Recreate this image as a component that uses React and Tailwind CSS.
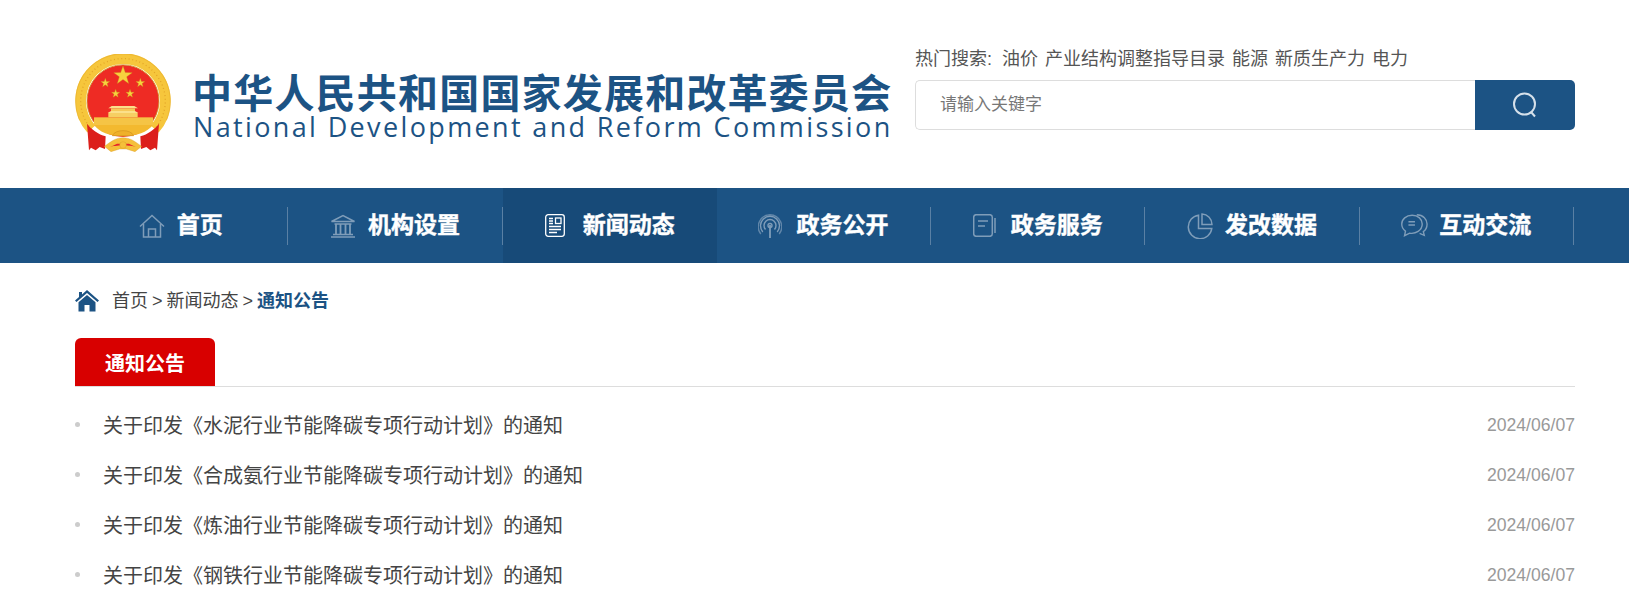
import React from "react";

const Star = ({ cx, cy, r, fill = "#f7d23e" }) => {
  const pts = [];
  for (let i = 0; i < 10; i++) {
    const a = -Math.PI / 2 + (i * Math.PI) / 5;
    const R = i % 2 === 0 ? r : r * 0.4;
    const x = Math.round((cx + R * Math.cos(a)) * 10) / 10;
    const y = Math.round((cy + R * Math.sin(a)) * 10) / 10;
    pts.push(x + "," + y);
  }
  return <polygon points={pts.join(" ")} fill={fill} stroke="#c98f1c" strokeWidth="1" />;
};

const Emblem = () => (
  <svg width="96" height="100" viewBox="28 27 288 300" className="shrink-0">
    <circle cx="172" cy="168" r="108" fill="#ee2b24" />
    <path d="M77 252 A127 127 0 1 1 267 252" fill="none" stroke="#f6c63c" strokeWidth="32" />
    <path d="M77 252 A127 127 0 1 1 267 252" fill="none" stroke="#e3a528" strokeWidth="4" strokeDasharray="3 8" />
    <path d="M42 226 A142 142 0 1 1 302 226" fill="none" stroke="#e8b02e" strokeWidth="2" />
    <path d="M84 230 A108 108 0 1 1 260 230" fill="none" stroke="#cf8e1c" strokeWidth="2.5" />
    <Star cx={172} cy={92} r={29} />
    <Star cx={119} cy={114} r={14} />
    <Star cx={224} cy={114} r={14} />
    <Star cx={150} cy={146} r={13} />
    <Star cx={193} cy={146} r={13} />
    <path d="M128 190 L138 183 H206 L217 190 Z" fill="#fbe08a" />
    <rect x="136" y="190" width="72" height="8" fill="#f6c95a" />
    <path d="M126 204 L136 198 H208 L218 204 Z" fill="#fbe08a" />
    <rect x="128" y="204" width="88" height="13" fill="#f6cf63" />
    <rect x="85" y="217" width="177" height="24" fill="#f5c445" />
    <path d="M85 240 H262 C244 262 214 272 172 274 C130 272 102 262 85 240 Z" fill="#f3b92f" />
    <path d="M64 236 C78 254 98 268 120 274 L118 312 L102 306 L90 316 L76 308 L70 316 Z" fill="#dc1f1b" />
    <path d="M280 236 C266 254 246 268 224 274 L226 312 L242 306 L254 316 L268 308 L274 316 Z" fill="#dc1f1b" />
    <path d="M140 272 C148 252 196 252 204 272 Z" fill="#efb02a" stroke="#d3931c" strokeWidth="2" />
    <path d="M116 304 C136 290 150 278 172 278 C194 278 208 290 228 304 L208 320 L182 312 H162 L136 320 Z" fill="#f5c03a" stroke="#d3931c" strokeWidth="1" />
    <path d="M134 306 C146 300 198 300 210 306 L190 296 H154 Z" fill="#e5262a" />
    <circle cx="172" cy="300" r="10" fill="#f5c03a" stroke="#d3931c" />
  </svg>
);

const HomeIcon = () => (
  <svg width="26" height="24" viewBox="0 0 26 24" fill="none" stroke="currentColor" strokeWidth="1.5">
    <path d="M1 12.5 L13 1.5 L25 12.5" />
    <path d="M4.5 10 V23 H21.5 V10" />
    <path d="M9.5 23 V15 H16.5 V23" />
  </svg>
);
const BankIcon = () => (
  <svg width="26" height="24" viewBox="0 0 26 24" fill="none" stroke="currentColor" strokeWidth="1.5">
    <path d="M1.5 7.5 L13 1.5 L24.5 7.5 Z" />
    <path d="M4.5 10 H21.5" />
    <path d="M6 10 V20 M10.5 10 V20 M15.5 10 V20 M20 10 V20" strokeWidth="1.8" />
    <path d="M3 20.5 H23 M1 23 H25" />
  </svg>
);
const NewsIcon = () => (
  <svg width="20" height="23" viewBox="0 0 20 23" fill="none" stroke="currentColor" strokeWidth="1.3">
    <rect x="0.7" y="0.7" width="18.6" height="21.6" rx="2.5" />
    <rect x="10.5" y="4" width="5.5" height="5.5" />
    <path d="M4 4.5 H8 M4 7 H8 M4 9.5 H8 M4 12.5 H16 M4 15.5 H16 M4 18.5 H12" />
  </svg>
);
const SignalIcon = () => (
  <svg width="24" height="24" viewBox="0 0 24 24" fill="none" stroke="currentColor" strokeWidth="1.4">
    <path d="M12 11 V24" strokeWidth="1.8" />
    <circle cx="12" cy="11.5" r="2" />
    <path d="M7.5 15.5 A6 6 0 1 1 16.5 15.5" />
    <path d="M4.8 18 A9.5 9.5 0 1 1 19.2 18" />
    <path d="M2.8 20 A12 12 0 0 1 12 0.7 A12 12 0 0 1 21.2 20" strokeOpacity="0.7" />
  </svg>
);
const PanelIcon = () => (
  <svg width="23" height="23" viewBox="0 0 23 23" fill="none" stroke="currentColor" strokeWidth="1.5">
    <rect x="0.7" y="0.7" width="18.6" height="21.6" rx="2.5" />
    <path d="M5 7 H15 M5 12 H12" />
    <path d="M22 4 V19" />
  </svg>
);
const PieIcon = () => (
  <svg width="26" height="26" viewBox="0 0 26 26" fill="none" stroke="currentColor" strokeWidth="1.5">
    <path d="M11.5 2.2 A11.8 11.8 0 1 0 24.8 15.5 H11.5 Z" />
    <path d="M15 1 A10.5 10.5 0 0 1 25 11.5 H15 Z" />
  </svg>
);
const ChatIcon = () => (
  <svg width="29" height="25" viewBox="0 0 29 25" fill="none" stroke="currentColor" strokeWidth="1.5">
    <path d="M12 1.5 C5.5 1.5 0.8 5.8 0.8 11 C0.8 14.3 2.3 16.8 4.8 18.6 L3.8 23.5 L9.3 20.7 C15.5 21.8 22.8 18 22.8 11 C22.8 5.8 18.5 1.5 12 1.5 Z" />
    <path d="M17 1 C24 1 28 6 28 11 C28 15 26.5 17.5 24 19 L25 23 L20 21" />
    <path d="M8 8.5 H15 M8 12 H15" />
  </svg>
);

const navItems = [
  ["首页", HomeIcon],
  ["机构设置", BankIcon],
  ["新闻动态", NewsIcon, true],
  ["政务公开", SignalIcon],
  ["政务服务", PanelIcon],
  ["发改数据", PieIcon],
  ["互动交流", ChatIcon],
];

const hot = ["油价", "产业结构调整指导目录", "能源", "新质生产力", "电力"];
const news = [
  "关于印发《水泥行业节能降碳专项行动计划》的通知",
  "关于印发《合成氨行业节能降碳专项行动计划》的通知",
  "关于印发《炼油行业节能降碳专项行动计划》的通知",
  "关于印发《钢铁行业节能降碳专项行动计划》的通知",
];

export default function App() {
  return (
    <div className="h-[595px] overflow-hidden bg-white font-['Liberation_Sans','Noto_Sans_CJK_SC',sans-serif]">
      <header className="flex h-[188px] pl-[75px]">
        <div className="flex w-[840px] pt-[54px]">
          <Emblem />
          <div className="ml-[21px] pt-[17px]">
            <div className="whitespace-nowrap text-[40px] font-bold leading-[40px] tracking-[1.2px] text-[#1c5384] font-['Noto_Sans_CJK_SC',sans-serif]">
              中华人民共和国国家发展和改革委员会
            </div>
            <div className="ml-[1px] mt-[1px] whitespace-nowrap text-[27px] leading-[30px] tracking-[2.36px] text-[#1c5384] font-['Open_Sans',sans-serif]">
              National Development and Reform Commission
            </div>
          </div>
        </div>
        <div className="w-[660px] pt-[47px]">
          <div className="flex h-[24px] items-center gap-[7px] whitespace-nowrap text-[18px] leading-[24px] text-[#555]">
            <span className="mr-[3px]">热门搜索:</span>
            {hot.map((h) => (
              <span key={h}>{h}</span>
            ))}
          </div>
          <div className="mt-[9px] flex h-[50px]">
            <div className="flex flex-1 items-center rounded-l-[5px] border border-r-0 border-[#ddd] pl-[24px] text-[17px] text-[#777]">
              请输入关键字
            </div>
            <div className="flex w-[100px] items-center justify-center rounded-r-[5px] bg-[#1c5384]">
              <svg width="26" height="26" viewBox="0 0 26 26" fill="none" stroke="#d5e0ea" strokeWidth="2">
                <circle cx="12.5" cy="12" r="10.5" />
                <path d="M19 20 L23 24.5" />
              </svg>
            </div>
          </div>
        </div>
      </header>

      <nav className="h-[75px] bg-[#1c5384] pl-[74px]">
        <ul className="flex h-full w-[1500px]">
          {navItems.map(([label, Icon, active]) => (
            <li key={label} className={`flex flex-1 items-center justify-center ${active ? "bg-[#174a78]" : ""}`}>
              <div className={`flex h-[38px] w-full items-center justify-center gap-[11px] ${active ? "" : "border-r border-[#5a80a4]"}`}>
                <span className={`flex w-[27px] shrink-0 justify-start ${active ? "text-white" : "text-[#7f9db9]"}`}>
                  <Icon />
                </span>
                <span className="text-[23px] font-bold leading-none text-white [-webkit-text-stroke:0.4px_white]">{label}</span>
              </div>
            </li>
          ))}
        </ul>
      </nav>

      <main className="w-[1575px] pl-[75px]">
        <div className="flex h-[75px] items-center pt-[1px] text-[18px] text-[#444] [word-spacing:-1px]">
          <svg width="24" height="22" viewBox="0 0 24 22" fill="#1c5384" className="mr-[13px]">
            <path d="M12 0 L24 10.5 L22.5 12 L12 3 L1.5 12 L0 10.5 L4 7 V2 H7 V4.4 Z" />
            <path d="M12 5 L20.5 12.2 V21.5 H14.5 V15 H9.5 V21.5 H3.5 V12.2 Z" />
          </svg>
          <span>首页 &gt; 新闻动态 &gt;</span>
          <span className="ml-[4px] font-bold text-[#1c5384]">通知公告</span>
        </div>

        <div className="border-b border-[#ddd]">
          <div className="flex h-[48px] w-[140px] items-center justify-center rounded-t-[6px] bg-[#d80000] pt-[3px] text-[20px] font-bold text-white">
            通知公告
          </div>
        </div>

        <ul className="pt-[12px]">
          {news.map((n) => (
            <li key={n} className="flex h-[50px] items-center">
              <span className="mr-[23px] h-[5px] w-[5px] rounded-full bg-[#ccc]" />
              <span className="flex-1 pt-[4px] text-[20px] text-[#444]">{n}</span>
              <span className="pt-[2px] text-[17.6px] text-[#999]">2024/06/07</span>
            </li>
          ))}
        </ul>
      </main>
    </div>
  );
}
